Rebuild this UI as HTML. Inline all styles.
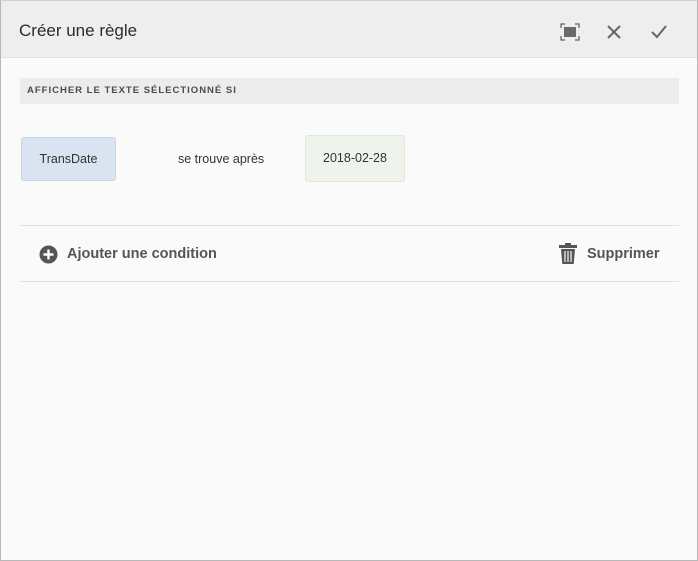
<!DOCTYPE html>
<html><head><meta charset="utf-8"><style>
*{margin:0;padding:0;box-sizing:border-box}
body{width:698px;height:561px;background:#fafafa;font-family:"Liberation Sans",sans-serif;position:relative;overflow:hidden}
.frame{position:absolute;inset:0;border:1px solid #b8b8b8;border-top-color:#d0d0d0}
.hdr{position:absolute;left:1px;top:1px;right:1px;height:57px;background:#eeeeee;border-bottom:1px solid #e2e2e2}
.title{position:absolute;left:18px;top:20px;font-size:17px;color:#2c2c2c}
.sec{position:absolute;left:20px;top:78px;width:659px;height:26px;background:#ececec;font-size:9.5px;font-weight:bold;letter-spacing:1px;color:#4b4b4b;padding:7px 0 0 7px}
.chip{position:absolute;border-radius:3px;font-size:12.5px;color:#333;text-align:center}
.line{position:absolute;left:20px;width:659px;height:1px;background:#e1e1e1}
.act{position:absolute;top:246px;font-size:14.5px;font-weight:bold;color:#555}
</style></head><body>
<div class="hdr">
<div class="title">Créer une règle</div>
<svg style="position:absolute;left:559px;top:22px" width="20" height="18" viewBox="0 0 20 18"><path d="M1 5V1h4M15 1h4v4M19 13v4h-4M5 17H1v-4" stroke="#666" stroke-width="1.3" fill="none"/><rect x="4" y="4" width="12" height="10" fill="#6a6a6a"/></svg>
<svg style="position:absolute;left:605px;top:23px" width="16" height="16" viewBox="0 0 16 16"><path d="M2 2L14 14M14 2L2 14" stroke="#666" stroke-width="2"/></svg>
<svg style="position:absolute;left:649px;top:23px" width="18" height="16" viewBox="0 0 18 16"><path d="M2 8l5 5L16 2" stroke="#666" stroke-width="2" fill="none"/></svg>
</div>
<div class="sec">AFFICHER LE TEXTE SÉLECTIONNÉ SI</div>
<div class="chip" style="left:21px;top:137px;width:95px;height:44px;background:#d9e4f2;border:1px solid #c7d3e4;line-height:43px">TransDate</div>
<div style="position:absolute;left:178px;top:152px;font-size:12.5px;color:#333">se trouve après</div>
<div class="chip" style="left:305px;top:135px;width:100px;height:47px;background:#eef4ec;border:1px solid #dfe6dc;line-height:45px">2018-02-28</div>
<div class="line" style="top:225px"></div>
<div class="line" style="top:281px"></div>
<svg style="position:absolute;left:39px;top:245px" width="19" height="19" viewBox="0 0 19 19"><circle cx="9.5" cy="9.5" r="9" fill="#555"/><path d="M9.5 4.5v10M4.5 9.5h10" stroke="#fff" stroke-width="2.4"/></svg>
<div class="act" style="left:67px">Ajouter une condition</div>
<svg style="position:absolute;left:559px;top:243px" width="18" height="21" viewBox="0 0 18 21"><rect x="6" y="0" width="6" height="2" fill="#555"/><rect x="0" y="2" width="18" height="3" fill="#555"/><path d="M2 6h14l-1.3 15H3.3z" fill="#555"/><path d="M6 8v11M9 8v11M12 8v11" stroke="#fafafa" stroke-width="1.2"/></svg>
<div class="act" style="left:587px">Supprimer</div>
<div class="frame"></div>
</body></html>
